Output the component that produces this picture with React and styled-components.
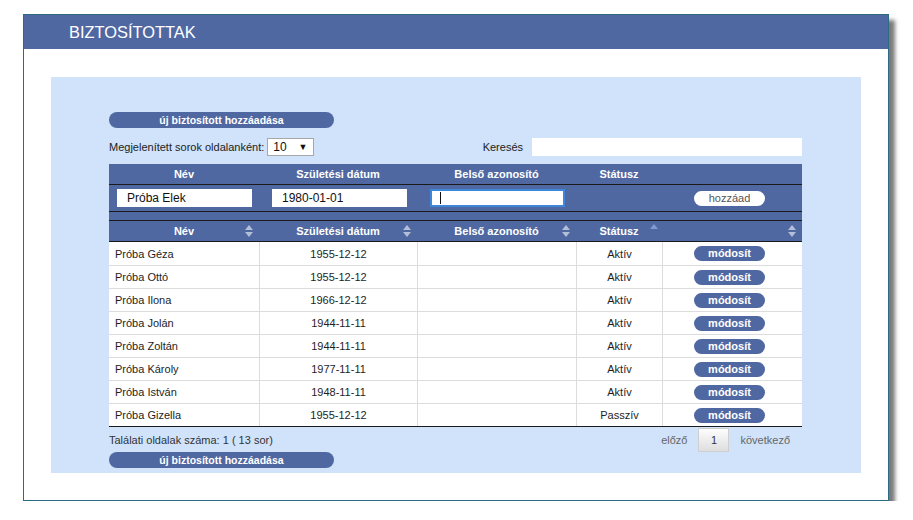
import styled, { createGlobalStyle } from 'styled-components';

const GlobalStyle = createGlobalStyle`
  html, body {
    margin: 0;
    padding: 0;
    background: #ffffff;
  }
  body {
    font-family: "Liberation Sans", Arial, sans-serif;
    font-size: 11px;
    color: #222;
  }
`;

const BLUE = '#5068a2';
const COLS = '150px 158px 159px 86px 140px';

const Page = styled.div`
  padding: 14px 0 0 23px;
`;

const Window = styled.div`
  width: 864px;
  height: 485px;
  border: 1px solid #2c6a86;
  background: #fff;
  box-shadow: 6px 6px 4px #7a7a7a;
  display: flex;
  flex-direction: column;
`;

const TitleBar = styled.div`
  height: 34px;
  background: ${BLUE};
  color: #fff;
  font-size: 16.4px;
  display: flex;
  align-items: center;
  padding-left: 45px;
  padding-top: 1px;
  box-sizing: border-box;
`;

const Panel = styled.div`
  margin: 28px 0 0 27px;
  width: 810px;
  height: 396px;
  background: #d0e3fb;
  box-sizing: border-box;
  padding: 35px 59px 0 58px;
  display: flex;
  flex-direction: column;
`;

const PillButton = styled.button`
  width: 225px;
  height: 16px;
  border: none;
  border-radius: 8px;
  background: ${BLUE};
  color: #fff;
  font-family: inherit;
  font-size: 10.5px;
  font-weight: bold;
  padding: 0;
  line-height: 14px;
  display: block;
`;

const Controls = styled.div`
  display: flex;
  justify-content: space-between;
  align-items: center;
  margin-top: 9px;
  height: 19px;
`;

const ControlGroup = styled.label`
  display: flex;
  align-items: center;
  gap: ${(p) => p.$gap || 3}px;
  color: #222;
`;

const Select = styled.div`
  width: 47px;
  height: 18px;
  border: 1px solid #a7a7a7;
  background: #fff;
  display: flex;
  align-items: center;
  justify-content: space-between;
  padding: 0 6px 0 5px;
  box-sizing: border-box;
  font-size: 12px;
  color: #111;
`;

const Caret = styled.span`
  font-size: 9px;
`;

const SearchInput = styled.div`
  width: 270px;
  height: 18px;
  background: #fff;
`;

const Table = styled.div`
  margin-top: 8px;
  width: 693px;
`;

const HeadRow = styled.div`
  display: grid;
  grid-template-columns: ${COLS};
  height: 20px;
  background: ${BLUE};
  color: #fff;
  font-weight: bold;
  border-bottom: 1px solid #1a1a1a;
`;

const HeadCell = styled.div`
  position: relative;
  display: flex;
  align-items: center;
  justify-content: center;
`;

const SortIcon = styled.svg`
  position: absolute;
  right: 6px;
  top: 4px;
`;

const AscIcon = styled.svg`
  position: absolute;
  left: 74px;
  top: 3px;
`;

const InputRow = styled.div`
  display: grid;
  grid-template-columns: ${COLS};
  height: 26px;
  background: ${BLUE};
  border-bottom: 1px solid #1a1a1a;
`;

const InputCell = styled.div`
  display: flex;
  align-items: center;
  padding-left: ${(p) => p.$pad || 0}px;
`;

const TextField = styled.div`
  width: 135px;
  height: 18px;
  background: #fff;
  box-sizing: border-box;
  display: flex;
  align-items: center;
  padding-left: 10px;
  font-size: 12px;
  color: #111;
  border: ${(p) => (p.$focus ? '2px solid #3d86d8' : 'none')};
`;

const Cursor = styled.span`
  width: 1px;
  height: 12px;
  background: #111;
  margin-left: -2px;
`;

const Strip = styled.div`
  height: 8px;
  background: ${BLUE};
  border-bottom: 1px solid #1a1a1a;
`;

const WhitePill = styled.button`
  width: 71px;
  height: 15px;
  border: none;
  border-radius: 8px;
  background: #fff;
  color: #555;
  font-family: inherit;
  font-size: 11px;
  padding: 0;
  margin-left: 32px;
`;

const Body = styled.div`
  background: #fff;
  border-bottom: 1px solid #1a1a1a;
`;

const Row = styled.div`
  display: grid;
  grid-template-columns: ${COLS};
  height: 23px;
  border-top: ${(p) => (p.$first ? 'none' : '1px solid #dcdcdc')};
  box-sizing: border-box;
`;

const Cell = styled.div`
  display: flex;
  align-items: center;
  justify-content: ${(p) => (p.$left ? 'flex-start' : 'center')};
  padding-left: ${(p) => (p.$left ? '6px' : '0')};
  border-left: ${(p) => (p.$noline ? 'none' : '1px solid #dcdcdc')};
  color: #1e1e1e;
`;

const ActionCell = styled(Cell)`
  justify-content: flex-start;
  padding-left: 31px;
`;

const ModButton = styled.button`
  width: 71px;
  height: 15px;
  border: none;
  border-radius: 8px;
  background: ${BLUE};
  color: #fff;
  font-family: inherit;
  font-size: 11px;
  font-weight: bold;
  padding: 0;
  line-height: 13px;
`;

const Footer = styled.div`
  display: flex;
  justify-content: space-between;
  align-items: center;
  height: 24px;
  margin-top: 1px;
  color: #333;
`;

const Pager = styled.div`
  display: flex;
  align-items: center;
  gap: 11px;
  padding-right: 12px;
  color: #666;
`;

const PageBox = styled.div`
  width: 31px;
  height: 24px;
  box-sizing: border-box;
  border: 1px solid #cfcfcf;
  background: linear-gradient(#fdfdfd, #dedede);
  display: flex;
  align-items: center;
  justify-content: center;
  color: #333;
`;

const Sort = () => (
  <SortIcon width="8" height="12" viewBox="0 0 8 12">
    <path d="M4 0 L8 5 L0 5 Z" fill="#b3bfd9" />
    <path d="M0 7 L8 7 L4 12 Z" fill="#b3bfd9" />
  </SortIcon>
);

const rows = [
  ['Próba Géza', '1955-12-12', 'Aktív'],
  ['Próba Ottó', '1955-12-12', 'Aktív'],
  ['Próba Ilona', '1966-12-12', 'Aktív'],
  ['Próba Jolán', '1944-11-11', 'Aktív'],
  ['Próba Zoltán', '1944-11-11', 'Aktív'],
  ['Próba Károly', '1977-11-11', 'Aktív'],
  ['Próba István', '1948-11-11', 'Aktív'],
  ['Próba Gizella', '1955-12-12', 'Passzív'],
];

export default function App() {
  return (
    <Page>
      <GlobalStyle />
      <Window>
        <TitleBar>BIZTOSÍTOTTAK</TitleBar>
        <Panel>
          <PillButton>új biztosított hozzáadása</PillButton>
          <Controls>
            <ControlGroup>
              Megjelenített sorok oldalanként:
              <Select>
                10 <Caret>▼</Caret>
              </Select>
            </ControlGroup>
            <ControlGroup $gap={9}>
              Keresés
              <SearchInput />
            </ControlGroup>
          </Controls>
          <Table>
            <HeadRow>
              <HeadCell>Név</HeadCell>
              <HeadCell>Születési dátum</HeadCell>
              <HeadCell>Belső azonosító</HeadCell>
              <HeadCell>Státusz</HeadCell>
              <HeadCell />
            </HeadRow>
            <InputRow>
              <InputCell $pad={8}>
                <TextField>Próba Elek</TextField>
              </InputCell>
              <InputCell $pad={13}>
                <TextField>1980-01-01</TextField>
              </InputCell>
              <InputCell $pad={13}>
                <TextField $focus>
                  <Cursor />
                </TextField>
              </InputCell>
              <InputCell />
              <InputCell>
                <WhitePill>hozzáad</WhitePill>
              </InputCell>
            </InputRow>
            <Strip />
            <HeadRow>
              <HeadCell>Név<Sort /></HeadCell>
              <HeadCell>Születési dátum<Sort /></HeadCell>
              <HeadCell>Belső azonosító<Sort /></HeadCell>
              <HeadCell>
                Státusz
                <AscIcon width="8" height="6" viewBox="0 0 8 6">
                  <path d="M4 0 L8 5 L0 5 Z" fill="#7f9ad6" />
                </AscIcon>
              </HeadCell>
              <HeadCell><Sort /></HeadCell>
            </HeadRow>
            <Body>
              {rows.map((r, i) => (
                <Row key={r[0]} $first={i === 0}>
                  <Cell $left $noline>{r[0]}</Cell>
                  <Cell>{r[1]}</Cell>
                  <Cell />
                  <Cell>{r[2]}</Cell>
                  <ActionCell>
                    <ModButton>módosít</ModButton>
                  </ActionCell>
                </Row>
              ))}
            </Body>
          </Table>
          <Footer>
            <span>Találati oldalak száma: 1 ( 13 sor)</span>
            <Pager>
              <span>előző</span>
              <PageBox>1</PageBox>
              <span>következő</span>
            </Pager>
          </Footer>
          <PillButton>új biztosított hozzáadása</PillButton>
        </Panel>
      </Window>
    </Page>
  );
}
